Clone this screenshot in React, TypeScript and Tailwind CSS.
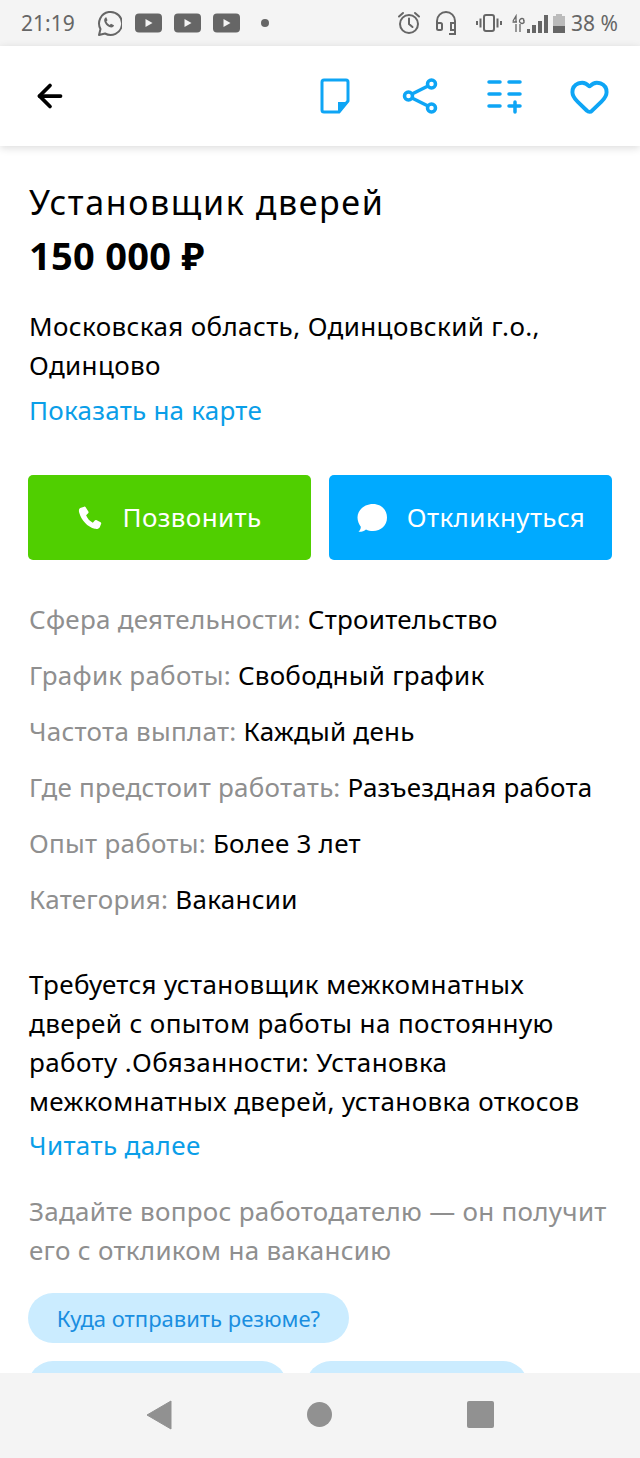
import { ArrowLeft, Heart } from 'lucide-react';

const FONT = "font-['Noto_Sans',sans-serif]";

const details = [
  ['Сфера деятельности:', 'Строительство'],
  ['График работы:', 'Свободный график'],
  ['Частота выплат:', 'Каждый день'],
  ['Где предстоит работать:', 'Разъездная работа'],
  ['Опыт работы:', 'Более 3 лет'],
  ['Категория:', 'Вакансии'],
];

function PlayIcon() {
  return (
    <svg width="27" height="20" viewBox="0 0 27 20">
      <rect width="27" height="19" y="0.5" rx="4" fill="#666" />
      <path d="M10.5 6l7 4-7 4z" fill="#f4f4f4" />
    </svg>
  );
}

function StatusBar() {
  return (
    <div className="h-[46px] shrink-0 bg-[#f4f4f4] flex items-center justify-between pl-[21px] pr-[22px] text-[#666] text-[21px]">
      <div className="flex items-center">
        <span className="w-[55px] leading-none">21:19</span>
        <svg className="ml-[20px]" width="26" height="27" viewBox="0 0 26 27" fill="none">
          <path d="M3 25l1.500-6A11.500 11.500 0 1 1 9 23.500z" stroke="#666" strokeWidth="2" strokeLinejoin="round" />
          <path d="M9.500 7.500c-1.500 1-1.800 3-.5 5.500c1.300 2.500 3.500 4.300 6.300 4.500c1.500 0 2.700-1 2.700-2.200l-3-1.500l-1.300 1.200c-1.500-.7-2.700-2-3.300-3.500l1.100-1.300l-1.200-2.900z" fill="#666" />
        </svg>
        <div className="ml-[13px] flex gap-[12px]">
          <PlayIcon />
          <PlayIcon />
          <PlayIcon />
        </div>
        <span className="ml-[21px] w-[8px] h-[8px] rounded-full bg-[#666]" />
      </div>
      <div className="flex items-center">
        <svg width="24" height="24" viewBox="0 0 24 24" fill="none" stroke="#666" strokeWidth="2">
          <circle cx="12" cy="13" r="9" />
          <path d="M12 7.500V13l3.500 3M2 5.500L6 2M22 5.500L18 2" strokeLinecap="round" />
        </svg>
        <svg className="ml-[14px]" width="22" height="25" viewBox="0 0 22 25" fill="none" stroke="#666" strokeWidth="2">
          <path d="M2 18V10a9 9 0 0 1 18 0v8" />
          <rect x="2" y="12" width="5" height="7" rx="1.500" />
          <path d="M20 12h-4v7h4v4h-6" />
        </svg>
        <svg className="ml-[19px]" width="26" height="20" viewBox="0 0 26 20" fill="none" stroke="#666" strokeWidth="2">
          <rect x="8" y="2" width="10" height="16" rx="2" />
          <path d="M4.500 5.500v9M1 8v4M21.500 5.500v9M25 8v4" />
        </svg>
        <div className="ml-[10px] flex items-end h-[19px]">
          <svg width="14" height="19" viewBox="0 0 14 19" fill="none" stroke="#666" strokeWidth="1.300">
            <path d="M1 7l3-5v6H0.500M5 8h-1M4 10v8M8 10v8M12 5.500a2.500 2.500 0 1 0 0 3v-2h-1" />
          </svg>
          <div className="ml-[1px] flex items-end gap-[2px]">
            <span className="w-[3px] h-[4px] bg-[#666]" />
            <span className="w-[4px] h-[8px] bg-[#666]" />
            <span className="w-[4px] h-[12px] bg-[#666]" />
            <span className="w-[4px] h-[18px] bg-[#666]" />
          </div>
        </div>
        <div className="ml-[5px] w-[12px] h-[19px] flex flex-col items-center">
          <span className="w-[6px] h-[2px] bg-[#bbb]" />
          <span className="w-[12px] flex-1 bg-[#bbb] flex flex-col justify-end">
            <span className="h-[7px] bg-[#666]" />
          </span>
        </div>
        <span className="ml-[6px] leading-none whitespace-nowrap">38 %</span>
      </div>
    </div>
  );
}

function Header() {
  return (
    <div className="relative z-10 h-[100px] shrink-0 bg-white shadow-[0_2px_8px_rgba(0,0,0,0.14)] flex items-center pl-[32px] pr-[8px]">
      <ArrowLeft size={36} color="#000" strokeWidth={2.500} />
      <div className="ml-auto flex items-center text-[#0ea5f5]">
        <div className="w-[85px] flex justify-center">
          <svg width="30" height="36" viewBox="0 0 30 36" fill="none">
            <path d="M4 2h22a2 2 0 0 1 2 2v19L19 34H4a2 2 0 0 1-2-2V4a2 2 0 0 1 2-2z" stroke="currentColor" strokeWidth="3" strokeLinejoin="round" />
            <path d="M18 24h10L18 34z" fill="currentColor" />
          </svg>
        </div>
        <div className="w-[85px] flex justify-center">
          <svg width="36" height="36" viewBox="0 0 36 36" fill="none" stroke="currentColor" strokeWidth="3.500">
            <circle cx="29.500" cy="6" r="4" />
            <circle cx="6.500" cy="18" r="4" />
            <circle cx="29.500" cy="30" r="4" />
            <path d="M10 16L26 8M10 20l16 8" />
          </svg>
        </div>
        <div className="w-[85px] flex justify-center">
          <svg width="38" height="36" viewBox="0 0 38 36" fill="none" stroke="currentColor" strokeWidth="3.500" strokeLinecap="round">
            <path d="M3 4h11M23 4h11M3 16h11M23 16h11M3 28h11M23 28h11M29 24v10" />
          </svg>
        </div>
        <div className="w-[85px] flex justify-center">
          <Heart size={41} strokeWidth={2.300} />
        </div>
      </div>
    </div>
  );
}

function NavBar() {
  return (
    <div className="h-[85px] shrink-0 bg-[#f4f4f4] flex items-center justify-center gap-[135px] pb-[2px] relative z-10">
      <svg width="26" height="30" viewBox="0 0 26 30">
        <path d="M25 1v28L1 15z" fill="#919191" stroke="#919191" strokeLinejoin="round" />
      </svg>
      <span className="w-[25px] h-[25px] rounded-full bg-[#919191]" />
      <span className="w-[27px] h-[27px] rounded-[2px] bg-[#919191]" />
    </div>
  );
}

export default function App() {
  return (
    <div className={`${FONT} w-[640px] h-[1458px] flex flex-col overflow-hidden bg-white`}>
      <StatusBar />
      <Header />
      <div className="flex-1 overflow-hidden px-[29px] pt-[33px] text-[#000] text-[26px] leading-[39px] tracking-[0.38px]">
        <h1 className="text-[34px] leading-[46px] font-normal tracking-[1.6px]">Установщик дверей</h1>
        <div className="mt-[5px] text-[38px] leading-[50px] font-bold tracking-[0.3px]">150 000 ₽</div>

        <p className="mt-[27px]">Московская область, Одинцовский г.о., Одинцово</p>
        <div className="mt-[6px] text-[#0a9ee8] tracking-[0.25px]">Показать на карте</div>

        <div className="mt-[45px] -mx-px flex gap-[18px]">
          <button className="w-[283px] h-[85px] rounded-[5px] bg-[#50cf00] text-white flex items-center justify-center gap-[19px]">
            <svg width="26" height="26" viewBox="0 0 24 24" fill="#fff">
              <path d="M6.600 1.500L3 2.800C1.800 3.400 1.500 5 2 7c1.800 7 7.800 13.500 14.500 15 2 .4 3.700 0 4.500-1.500l1.300-3.200c.2-.6 0-1.100-.5-1.400l-4-2c-.5-.3-1-.2-1.400.3l-1.800 2.100c-2.800-1.300-5-3.800-6.200-6.800l1.900-1.800c.4-.4.500-.9.300-1.400L8 2c-.3-.5-.8-.7-1.400-.5z" />
            </svg>
            Позвонить
          </button>
          <button className="w-[283px] h-[85px] rounded-[5px] bg-[#00aaff] text-white flex items-center justify-center gap-[19px]">
            <svg width="32" height="30" viewBox="0 0 32 30" fill="#fff">
              <path d="M17 1c8 0 14 5.500 14 13.500S25 28 17 28c-2.500 0-5-.5-7-1.500c-1.800 1.500-4.500 2.500-7.500 2.300c1.500-1.300 2.300-3 2.300-5C3 21 1.500 18 1.500 14.500C1.500 6.500 9 1 17 1z" />
            </svg>
            Откликнуться
          </button>
        </div>

        <div className="mt-[40px] flex flex-col gap-[17px] tracking-[0.25px]">
          {details.map(([label, value]) => (
            <div key={label} className="whitespace-nowrap">
              <span className="text-[#8f8f8f]">{label}</span> {value}
            </div>
          ))}
        </div>

        <p className="mt-[46px]">
          Требуется установщик межкомнатных дверей с опытом работы на постоянную работу .Обязанности: Установка межкомнатных дверей, установка откосов
        </p>
        <div className="mt-[5px] text-[#0a9ee8]">Читать далее</div>

        <p className="mt-[27px] text-[#8f8f8f] tracking-[0.28px]">
          Задайте вопрос работодателю — он получит его с откликом на вакансию
        </p>

        <div className="mt-[23px] -mx-px flex flex-col gap-[18px]">
          <span className="w-[321px] h-[50px] rounded-full bg-[#cbecff] text-[#1a8ee0] text-[22px] tracking-normal flex items-center justify-center">
            Куда отправить резюме?
          </span>
          <div className="flex gap-[19px]">
            <span className="w-[259px] h-[50px] rounded-full bg-[#cbecff]" />
            <span className="w-[222px] h-[50px] rounded-full bg-[#cbecff]" />
          </div>
        </div>
      </div>
      <NavBar />
    </div>
  );
}
